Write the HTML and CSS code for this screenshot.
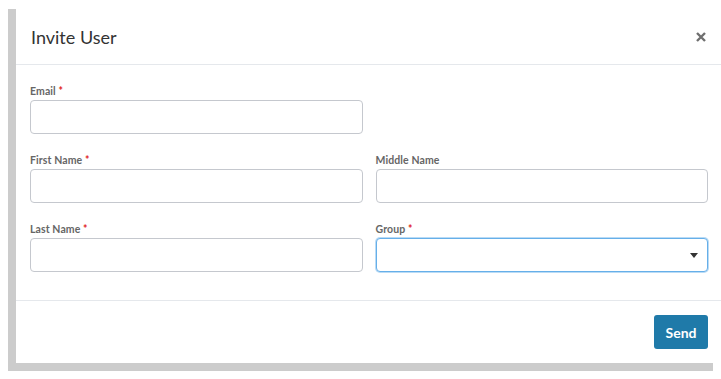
FILE: index.html
```html
<!DOCTYPE html>
<html lang="en">
<head>
    <meta charset="UTF-8">
    <meta name="viewport" content="width=device-width, initial-scale=1.0">
    <title>Invite User</title>
    <link rel="stylesheet" href="styles.css">
</head>
<body>
    <div class="shade">
        <div class="modal">
            <div class="modal-header">
                <h4 class="modal-title">Invite User</h4>
                <button class="close" type="button" aria-label="Close">
                    <svg width="10" height="10" viewBox="0 0 10 10">
                        <path d="M1 1 L9 9 M9 1 L1 9" stroke="#6f6f6f" stroke-width="2.4" stroke-linecap="butt"/>
                    </svg>
                </button>
            </div>
            <div class="modal-body">
                <div class="row">
                    <div class="form-group">
                        <label>Email <span class="req">*</span></label>
                        <input type="text" class="form-control">
                    </div>
                    <div class="form-group"></div>
                </div>
                <div class="row">
                    <div class="form-group">
                        <label>First Name <span class="req">*</span></label>
                        <input type="text" class="form-control">
                    </div>
                    <div class="form-group">
                        <label>Middle Name</label>
                        <input type="text" class="form-control">
                    </div>
                </div>
                <div class="row">
                    <div class="form-group">
                        <label>Last Name <span class="req">*</span></label>
                        <input type="text" class="form-control">
                    </div>
                    <div class="form-group">
                        <label>Group <span class="req">*</span></label>
                        <div class="form-control select focused">
                            <span class="caret"></span>
                        </div>
                    </div>
                </div>
            </div>
            <div class="modal-footer">
                <button class="btn" type="button">Send</button>
            </div>
        </div>
    </div>
</body>
</html>
```

FILE: styles.css
```css
body { margin: 0; padding: 17px 0 0 8px; background: #fff; font-family: 'Lato', sans-serif; color: #333; }
.shade { width: 705px; background: #cccccc; padding-bottom: 8px; }
.modal { width: 705px; height: 354px; margin: -8px 0 0 8px; background: #fff; display: flex; flex-direction: column; }
.modal-header { display: flex; align-items: center; justify-content: space-between; height: 55px; padding: 0 15px 0 15px; border-bottom: 1px solid #e5e8ec; }
.modal-title { margin: 0; font-size: 18px; font-weight: 400; color: #333; }
.close { background: none; border: none; padding: 0; cursor: pointer; display: flex; }
.modal-body { flex: 1; padding: 15px 13px 0 14px; }
.row { display: flex; gap: 13px; }
.form-group { flex: 1; margin-bottom: 15px; }
.form-group label { display: block; padding-top: 3px; font-size: 10.5px; font-weight: 700; color: #666; line-height: 17px; letter-spacing: 0.1px; }
.req { color: #e02020; }
.form-control { display: block; box-sizing: border-box; width: 100%; height: 34px; margin: 0; padding: 6px 12px; border: 1px solid #c5c8ce; border-radius: 4px; background: #fff; font-family: 'Lato', sans-serif; font-size: 14px; }
.select { position: relative; }
.focused { border-color: #66afe9; box-shadow: 0 0 0 1px rgba(102, 175, 233, 0.45); }
.caret { position: absolute; right: 9px; top: 14px; width: 0; height: 0; border-left: 4px solid transparent; border-right: 4px solid transparent; border-top: 5px solid #333; }
.modal-footer { display: flex; justify-content: flex-end; padding: 14px 13px 14px 15px; border-top: 1px solid #e5e8ec; }
.btn { width: 54px; height: 34px; background: #1f7aa9; color: #fff; border: none; border-radius: 3px; font-family: 'Lato', sans-serif; font-size: 14px; font-weight: 700; cursor: pointer; }
```
